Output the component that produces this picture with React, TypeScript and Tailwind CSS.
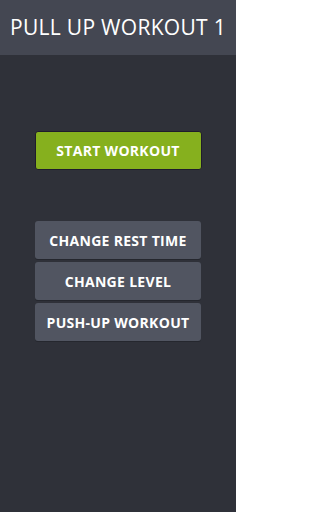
const menu = ["CHANGE REST TIME", "CHANGE LEVEL", "PUSH-UP WORKOUT"];

export default function App() {
  return (
    <div
      className="w-[236px] h-[512px] bg-[#2f3139] flex flex-col"
      style={{ fontFamily: '"Open Sans", sans-serif' }}
    >
      <div className="h-[55px] bg-[#444752] flex items-center justify-center">
        <h1 className="text-white text-[21px] font-medium leading-none tracking-[0.3px]">PULL UP WORKOUT 1</h1>
      </div>

      <div className="flex flex-col items-center pt-[76px]">
        <button className="w-[167px] h-[39px] bg-[#86b01e] border border-[#1f1c2c] rounded-[3px] text-white font-bold text-[14px] tracking-[0.3px]">
          START WORKOUT
        </button>

        <div className="flex flex-col gap-[3px] mt-[51px]">
          {menu.map((label) => (
            <button
              key={label}
              className="w-[166px] h-[38px] bg-[#515561] rounded-[3px] shadow-[0_1px_0_#25272e] text-white font-bold text-[14px] tracking-[0.3px]"
            >
              {label}
            </button>
          ))}
        </div>
      </div>
    </div>
  );
}
